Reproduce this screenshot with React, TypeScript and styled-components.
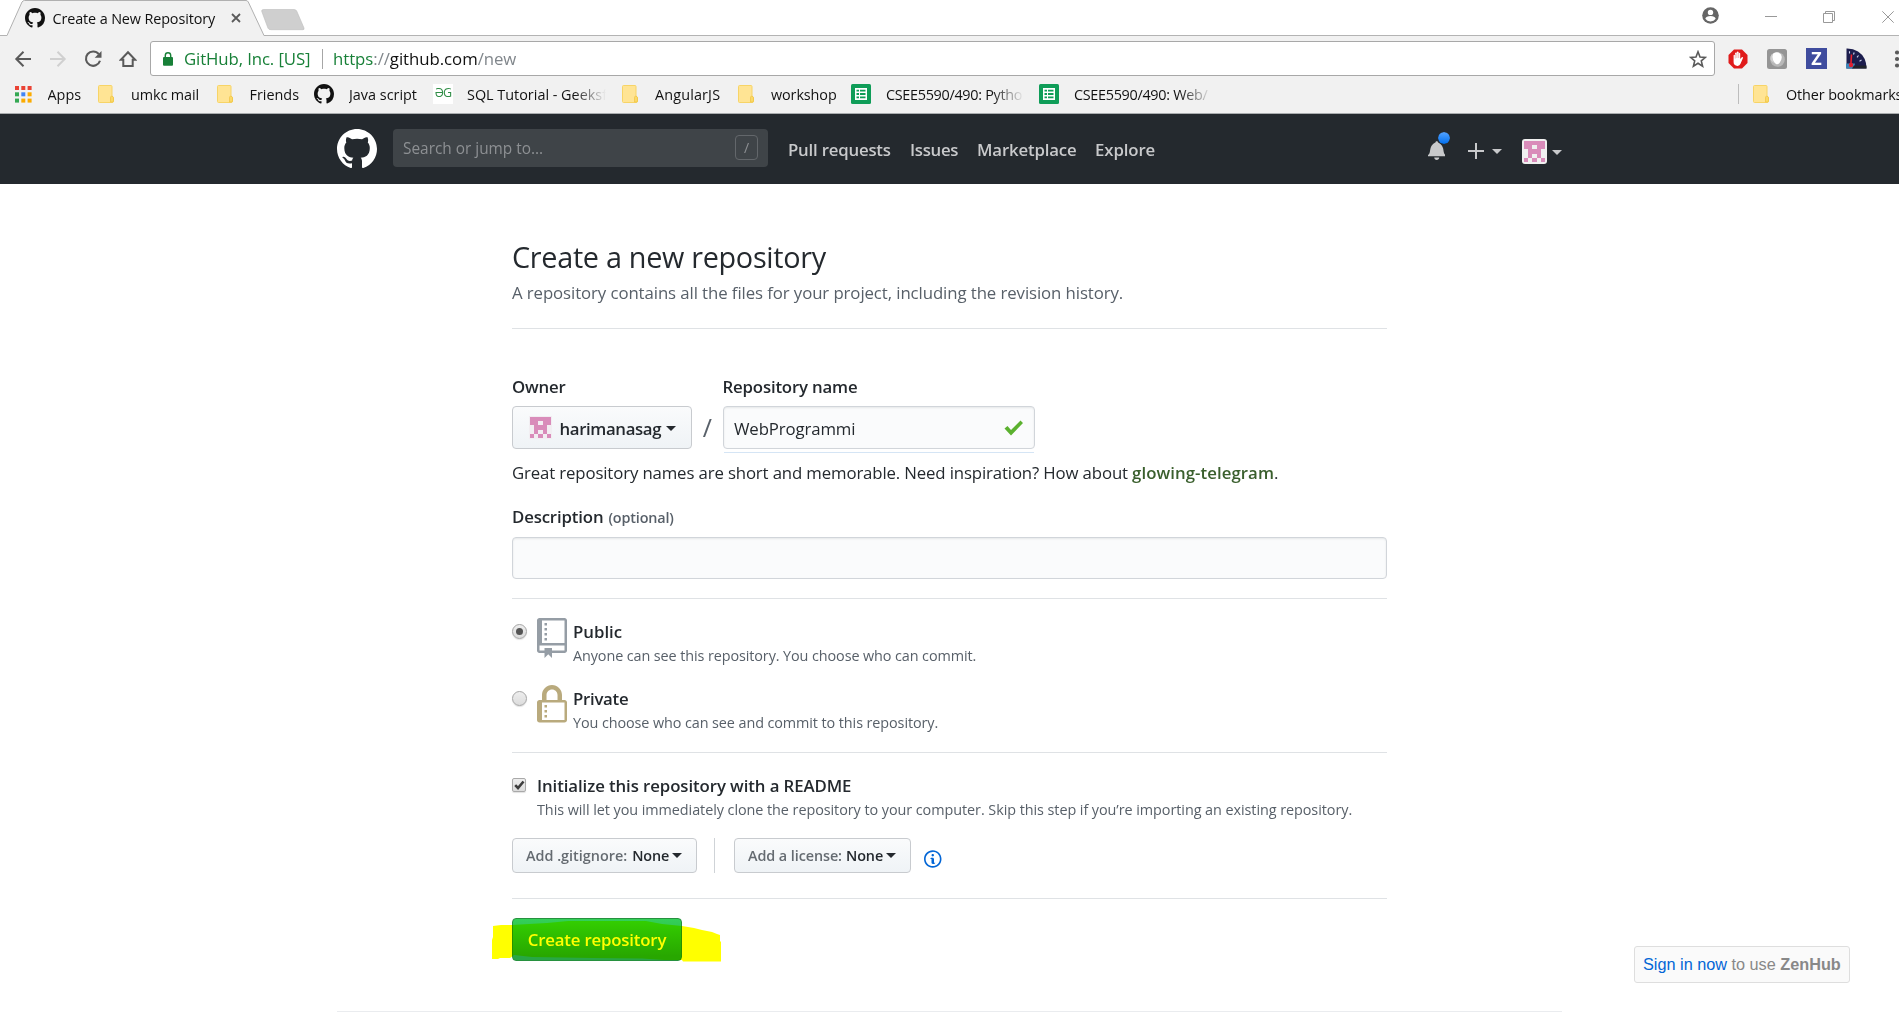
import React from "react";
import styled, { createGlobalStyle, css } from "styled-components";

const GlobalStyle = createGlobalStyle`
  * { box-sizing: border-box; }
  html, body { margin: 0; padding: 0; background: #fff; }
  body {
    font-family: "Open Sans", "Noto Sans", sans-serif;
    font-size: 16.8px;
    color: #24292e;
    overflow: hidden;
  }
  svg { display: block; flex: none; }
`;

const Page = styled.div`
  position: relative;
  width: 1899px;
  height: 1029px;
  overflow: hidden;
  display: flex;
  flex-direction: column;
`;

const Text = styled.span<{ $ls?: number }>`
  white-space: pre;
  letter-spacing: ${(p) => p.$ls ?? 0}px;
`;

/* ---------- browser chrome ---------- */

const TabStrip = styled.div`
  display: flex;
  height: 36px;
  padding-left: 7px;
  background: linear-gradient(#b3b3b3, #b3b3b3) 0 35px / 100% 1px no-repeat #fff;
`;

const Tab = styled.div`
  position: relative;
  display: flex;
  align-items: center;
  width: 259px;
  height: 36px;
  padding: 0 25px 0 18px;
  font-size: 14.4px;
  color: #111;
`;

const TabShape = styled.svg`
  position: absolute;
  left: 0;
  top: 0;
`;

const TabTitle = styled(Text)`
  position: relative;
  margin-left: 7.5px;
  width: 178px;
`;

const TabIcon = styled.span`
  position: relative;
  display: flex;
`;

const NewTab = styled.svg`
  margin: 9px 0 0 -5px;
`;

const WindowControls = styled.div`
  display: flex;
  align-items: flex-start;
  margin-left: auto;
  padding: 7px 5px 0 0;
`;

const WindowGlyph = styled.svg<{ $ml: number; $mt?: number }>`
  margin-left: ${(p) => p.$ml}px;
  margin-top: ${(p) => p.$mt ?? 0}px;
`;

const Toolbar = styled.div`
  display: flex;
  align-items: center;
  height: 41px;
  padding: 5px 0 1px 14px;
  background: #f1f1f1;
`;

const NavButtons = styled.div`
  display: flex;
  flex: none;
  gap: 17px;
  width: 136px;
`;

const Omnibox = styled.div`
  display: flex;
  flex: none;
  align-items: center;
  width: 1565px;
  height: 35px;
  padding: 0 7px 0 12px;
  border: 1px solid #a8a8a8;
  border-radius: 3px;
  background: #fff;
  color: #80868b;
`;

const Identity = styled(Text)`
  width: 138px;
  margin-left: 11px;
  color: #188038;
`;

const OmniDivider = styled.span`
  width: 1px;
  height: 20px;
  margin-right: 10px;
  background: #a6a6a6;
`;

const Secure = styled.span`
  color: #188038;
`;
const Host = styled.span`
  color: #111;
`;

const StarSlot = styled.div`
  margin-left: auto;
`;

const Extensions = styled.div`
  display: flex;
  flex: none;
  align-items: center;
  gap: 19px;
  padding-left: 13px;
`;

const ZBadge = styled.div`
  width: 21px;
  height: 21px;
  background: #3f4c9e;
  color: #fff;
  font-weight: 700;
  font-size: 18px;
  line-height: 21px;
  text-align: center;
`;

const BookmarkBar = styled.div`
  display: flex;
  align-items: center;
  height: 37px;
  padding: 0 0 2px 15px;
  background: #f1f1f1;
  border-bottom: 1px solid #a9acae;
  font-size: 14.4px;
  color: #111;
`;

const BookmarkItem = styled.div<{ $w: number; $off: number }>`
  display: grid;
  grid-template-columns: ${(p) => p.$off}px 1fr;
  align-items: center;
  flex: none;
  width: ${(p) => p.$w}px;
`;

const BookmarkLabel = styled(Text)<{ $clip?: number }>`
  overflow: hidden;
  ${(p) =>
    p.$clip &&
    css`
      width: ${p.$clip}px;
      mask-image: linear-gradient(to right, #000 calc(100% - 32px), transparent);
    `}
`;

const GeeksBadge = styled.div`
  width: 20px;
  height: 20px;
  background: #fff;
  color: #2f8d46;
  font-size: 12.5px;
  line-height: 18px;
  text-align: center;
  letter-spacing: -0.8px;
`;

const OtherBookmarks = styled.div`
  display: flex;
  align-items: center;
  flex: none;
  height: 20px;
  margin-left: auto;
  margin-right: -4px;
  padding-left: 14px;
  border-left: 1px solid #bdbdbd;
  width: 165px;
`;

/* ---------- site header ---------- */

const SiteHeader = styled.header`
  height: 70px;
  padding: 0 337px;
  display: flex;
  align-items: flex-start;
  background: #24292e;
  color: #c8c9cb;
`;

const Logo = styled.div`
  margin-top: 15px;
  width: 56px;
`;

const SearchBox = styled.div`
  display: flex;
  align-items: center;
  justify-content: space-between;
  width: 375px;
  height: 38px;
  margin-top: 15px;
  padding: 0 10px 0 10px;
  border-radius: 4px;
  background: #3f4448;
  color: #8d9093;
  font-size: 15.4px;
`;

const SlashKey = styled.span`
  width: 23px;
  height: 25px;
  margin-top: -1px;
  border: 1px solid #63676b;
  border-radius: 4px;
  font-size: 14px;
  line-height: 23px;
  text-align: center;
`;

const HeaderNav = styled.nav`
  display: flex;
  margin: 23px 0 0 20px;
  font-weight: 600;
  line-height: 26px;
`;

const NavLink = styled(Text)<{ $w: number }>`
  width: ${(p) => p.$w}px;
`;

const HeaderActions = styled.div`
  display: flex;
  align-items: center;
  height: 70px;
  margin-left: auto;
`;

const BellWrap = styled.div`
  position: relative;
  margin-right: 23px;
  margin-top: 1px;
`;

const UnreadDot = styled.span`
  position: absolute;
  left: 9px;
  top: -9px;
  width: 14px;
  height: 14px;
  border: 1.5px solid #24292e;
  border-radius: 50%;
  background: linear-gradient(#54a3ff, #006eed) padding-box;
`;

const PlusIcon = styled.svg`
  margin-top: 3px;
`;

const Caret = styled.span<{ $ml?: number; $mt?: number }>`
  display: inline-block;
  width: 0;
  height: 0;
  margin-left: ${(p) => p.$ml ?? 5}px;
  margin-top: ${(p) => p.$mt ?? 0}px;
  border: 5px solid transparent;
  border-top-color: currentColor;
  border-bottom: 0;
`;

const AvatarFrame = styled.div`
  display: flex;
  align-items: center;
  justify-content: center;
  width: 25px;
  height: 25px;
  margin: 5px 0 0 20px;
  border-radius: 3px;
  background: #f0f0f0;
`;

/* ---------- form ---------- */

const Main = styled.main`
  width: 875px;
  margin: 0 auto;
  padding-top: 54px;
  flex: none;
`;

const Heading = styled.h1`
  margin: 0;
  font-size: 28.8px;
  font-weight: 400;
  line-height: 38px;
  letter-spacing: -0.3px;
  white-space: nowrap;
`;

const Lead = styled.p`
  margin: 4px 0 0;
  line-height: 26px;
  color: #586069;
  letter-spacing: -0.085px;
  white-space: nowrap;
`;

const Rule = styled.div<{ $mt: number }>`
  height: 1px;
  margin-top: ${(p) => p.$mt}px;
  background: #dfe2e5;
`;

const FieldRow = styled.div`
  display: flex;
  margin-top: 45px;
`;

const Field = styled.div``;

const Label = styled.div<{ $h?: number }>`
  height: ${(p) => p.$h ?? 32}px;
  font-weight: 600;
  line-height: 26px;
`;

const Optional = styled(Text)`
  margin-left: 5px;
  font-size: 14.4px;
  color: #586069;
`;

const controlFace = css`
  border: 1px solid #c8cbcf;
  border-radius: 4px;
  background: linear-gradient(#fafbfc, #eff3f6);
`;

const OwnerButton = styled.div`
  ${controlFace}
  display: flex;
  align-items: center;
  width: 180px;
  height: 43px;
  padding: 1px 0 0 15.5px;
  font-weight: 600;
`;

const OwnerAvatar = styled.span`
  display: flex;
  margin: -1px 8px 0 0;
  padding: 1px;
  background: #f2eef2;
`;

const Slash = styled.div`
  width: 30.5px;
  padding: 32px 0 0 0;
  font-size: 25px;
  line-height: 43px;
  text-align: center;
  color: #586069;
`;

const Input = styled.div<{ $w: number; $h: number }>`
  display: flex;
  align-items: center;
  justify-content: space-between;
  width: ${(p) => p.$w}px;
  height: ${(p) => p.$h}px;
  padding: 1px 10px 0 10.5px;
  border: 1px solid #d1d5da;
  border-radius: 4px;
  background: #fafbfc;
  box-shadow: inset 0 1px 2px rgba(27, 31, 35, 0.09);
`;

const FocusEdge = styled.div`
  width: 310px;
  height: 1px;
  margin: 3px 0 -4px 1px;
  background: #d5e5f5;
`;

const Hint = styled.p`
  margin: 11px 0 18px;
  line-height: 26px;
  white-space: nowrap;
`;

const Suggestion = styled(Text)`
  font-weight: 600;
  color: #3a5f2d;
`;

const ChoiceRow = styled.div<{ $mt: number }>`
  display: flex;
  height: 46px;
  margin-top: ${(p) => p.$mt}px;
`;

const Radio = styled.span<{ $on?: boolean }>`
  display: flex;
  align-items: center;
  justify-content: center;
  width: 15px;
  height: 15px;
  margin: 4px 10px 0 0;
  border: 1px solid #a5a5a5;
  border-radius: 50%;
  background: linear-gradient(#eee, #dcdcdc);
  box-shadow: 0 1px 1px rgba(0, 0, 0, 0.12);
  &::after {
    content: "";
    width: 7px;
    height: 7px;
    border-radius: 50%;
    background: ${(p) => (p.$on ? "#555" : "transparent")};
  }
`;

const ChoiceIcon = styled.div<{ $mt: number }>`
  width: 36px;
  margin-top: ${(p) => p.$mt}px;
`;

const ChoiceTitle = styled.div`
  font-weight: 600;
  line-height: 24px;
  height: 24px;
`;

const ChoiceNote = styled.div`
  font-size: 14.4px;
  line-height: 24px;
  color: #586069;
`;

const Checkbox = styled.span`
  display: flex;
  align-items: center;
  justify-content: center;
  width: 14px;
  height: 14px;
  margin: 4px 11px 0 0;
  border: 1px solid #a9a9a9;
  border-radius: 2px;
  background: linear-gradient(#eee, #dcdcdc);
  box-shadow: 0 1px 1px rgba(0, 0, 0, 0.12);
`;

const Options = styled.div`
  display: flex;
  margin-top: 18px;
  height: 35px;
`;

const SelectButton = styled.div<{ $w: number }>`
  ${controlFace}
  display: flex;
  align-items: center;
  width: ${(p) => p.$w}px;
  padding: 0 0 1px 13px;
  font-size: 14.4px;
  font-weight: 600;
`;

const Muted = styled(Text)<{ $gap: number }>`
  margin-right: ${(p) => p.$gap}px;
  color: #656b71;
`;

const OptionDivider = styled.span`
  width: 1px;
  margin: 0 19px 0 17px;
  background: #cfd3d7;
`;

const InfoSlot = styled.span`
  margin: 11px 0 0 13px;
`;

const SubmitArea = styled.div`
  position: relative;
  margin-top: 19px;
  height: 43px;
`;

const SubmitButton = styled.div`
  display: flex;
  align-items: center;
  justify-content: center;
  width: 170px;
  height: 43px;
  border: 1px solid #27913f;
  border-radius: 4px;
  background: linear-gradient(#34d058, #28a745 90%);
  color: #fff;
  font-weight: 600;
`;

const Marker = styled.svg`
  position: absolute;
  left: -20px;
  top: 2px;
  mix-blend-mode: multiply;
`;

const FooterRule = styled.div`
  flex: none;
  height: 1px;
  margin: 50px 337px 0;
  background: #eaecef;
`;

const ZenHub = styled.div`
  position: absolute;
  left: 1634px;
  top: 946px;
  display: flex;
  gap: 4.5px;
  width: 216px;
  height: 37px;
  padding-left: 8px;
  border: 1px solid #dedede;
  border-radius: 3px;
  background: #fafafa;
  font-family: "Liberation Sans", Arial, sans-serif;
  font-size: 16.25px;
  line-height: 35px;
  color: #888;
`;

const ZenLink = styled(Text)`
  color: #0366d6;
`;

/* ---------- drawings ---------- */

const CAT =
  "M8 0C3.58 0 0 3.58 0 8c0 3.54 2.29 6.53 5.47 7.59.4.07.55-.17.55-.38 0-.19-.01-.82-.01-1.49-2.01.37-2.53-.49-2.69-.94-.09-.23-.48-.94-.82-1.13-.28-.15-.68-.52-.01-.53.63-.01 1.08.58 1.23.82.72 1.21 1.87.87 2.33.66.07-.52.28-.87.51-1.07-1.78-.2-3.64-.89-3.64-3.95 0-.87.31-1.59.82-2.15-.08-.2-.36-1.02.08-2.12 0 0 .67-.21 2.2.82.64-.18 1.32-.27 2-.27s1.36.09 2 .27c1.53-1.04 2.2-.82 2.2-.82.44 1.1.16 1.92.08 2.12.51.56.82 1.27.82 2.15 0 3.07-1.87 3.75-3.65 3.95.29.25.54.73.54 1.48 0 1.07-.01 1.93-.01 2.2 0 .21.15.46.55.38A8.01 8.01 0 0 0 16 8c0-4.42-3.58-8-8-8z";

const Cat = ({ size, fill }: { size: number; fill: string }) => (
  <svg width={size} height={size} viewBox="0 0 16 16" fill={fill}>
    <path d={CAT} />
  </svg>
);

const IDENTICON = ["11111", "11011", "01110", "01010", "10101"];

const Identicon = ({ w, h }: { w: number; h: number }) => (
  <svg width={w} height={h} viewBox="0 0 5 5" preserveAspectRatio="none" fill="#d98cba" shapeRendering="crispEdges">
    {IDENTICON.flatMap((row, y) =>
      row.split("").map((c, x) => (c === "1" ? <rect key={`${x}${y}`} x={x} y={y} width="1" height="1" /> : null))
    )}
  </svg>
);

const Folder = () => (
  <svg width="16" height="18" viewBox="0 0 16 18">
    <path d="M1.5.5H13q1 0 1 1V11l1.500 1.500V16q0 1.500-1.500 1.500H1.500q-1 0-1-1v-15q0-1 1-1z" fill="#ffe494" stroke="#f7d467" />
    <path d="M12.500 17v-4.500q0-1.300 1.300-1.300t1.700 1.300V16q0 1-1 1z" fill="#fbd968" stroke="#efc343" strokeWidth=".7" />
  </svg>
);

const APP_COLORS = ["#ea4335", "#ea4335", "#ea4335", "#34a853", "#4285f4", "#fbab00", "#34a853", "#fbab00", "#fbab00"];

const AppsGrid = () => (
  <svg width="17" height="17" viewBox="0 0 17 17">
    {APP_COLORS.map((c, i) => (
      <rect key={i} x={(i % 3) * 6.3} y={Math.floor(i / 3) * 6.3} width="4" height="4" fill={c} />
    ))}
  </svg>
);

const Sheet = () => (
  <svg width="20" height="20" viewBox="0 0 20 20">
    <rect width="20" height="20" rx="1.500" fill="#0f9d58" />
    <path d="M4 4h12v12H4z" fill="#fff" />
    <path d="M5.500 5.800h2.500v1.800H5.500zM9 5.800h5.500v1.800H9zM5.500 9.100h2.500v1.800H5.500zM9 9.100h5.500v1.800H9zM5.500 12.400h2.500v1.800H5.500zM9 12.400h5.500v1.800H9z" fill="#0f9d58" />
  </svg>
);

const NavIcons = () => (
  <NavButtons>
    <svg width="18" height="18" viewBox="0 0 18 18" fill="none" stroke="#5a5a5a" strokeWidth="2">
      <path d="M17 9H2.500M9.500 1.800L2.300 9l7.200 7.200" />
    </svg>
    <svg width="18" height="18" viewBox="0 0 18 18" fill="none" stroke="#d0d0d0" strokeWidth="2">
      <path d="M1 9h14.500M8.500 1.800L15.700 9l-7.200 7.200" />
    </svg>
    <svg width="18" height="18" viewBox="0 0 18 18" fill="none" stroke="#5a5a5a" strokeWidth="2.100">
      <path d="M14.800 4.200A7.200 7.200 0 1 0 16 10.800" />
      <path d="M17.500 1v6.800h-6.800z" fill="#5a5a5a" stroke="none" />
    </svg>
    <svg width="18" height="18" viewBox="0 0 18 18" fill="none" stroke="#5a5a5a" strokeWidth="2">
      <path d="M9 2.200L1.800 9.700H4.300V16h9.400V9.700h2.500z" />
    </svg>
  </NavButtons>
);

type Mark = { icon: React.ReactNode; label: string; w: number; off: number; ls?: number; clip?: number };

const MARKS: Mark[] = [
  { icon: <AppsGrid />, label: "Apps", w: 83, off: 32.5 },
  { icon: <Folder />, label: "umkc mail", w: 119, off: 33, ls: -0.1 },
  { icon: <Folder />, label: "Friends", w: 97, off: 32.5 },
  { icon: <Cat size={20} fill="#111" />, label: "Java script", w: 119, off: 35 },
  { icon: <GeeksBadge>ӘG</GeeksBadge>, label: "SQL Tutorial - Geeksf", w: 189, off: 34, clip: 139 },
  { icon: <Folder />, label: "AngularJS", w: 116, off: 33, ls: 0.15 },
  { icon: <Folder />, label: "workshop", w: 113, off: 33, ls: -0.1 },
  { icon: <Sheet />, label: "CSEE5590/490: Pytho", w: 188, off: 35, ls: -0.3, clip: 138 },
  { icon: <Sheet />, label: "CSEE5590/490: Web/", w: 180, off: 35, ls: -0.3, clip: 138 },
];

const Browser = () => (
  <>
    <TabStrip>
      <Tab>
        <TabShape width="259" height="36" viewBox="0 0 259 36">
          <path d="M0 35.500L15 2Q16 .5 17.500.5H239Q240.500.5 241.300 2L257 35.500V36H0z" fill="#f1f1f1" />
          <path d="M0 35.500L15 2Q16 .5 17.500.5H239Q240.500.5 241.300 2L257 35.500H259" fill="none" stroke="#b0b0b0" />
        </TabShape>
        <TabIcon>
          <Cat size={20} fill="#111" />
        </TabIcon>
        <TabTitle $ls={-0.12}>Create a New Repository</TabTitle>
        <TabIcon>
          <svg width="10" height="10" viewBox="0 0 10 10" stroke="#5a5a5a" strokeWidth="1.800">
            <path d="M1 1l8 8M9 1L1 9" />
          </svg>
        </TabIcon>
      </Tab>
      <NewTab width="44" height="22" viewBox="0 0 44 22">
        <path d="M2.500.5H33q2 0 2.700 1.500L43 19q.6 1.700-1 1.700H10q-2.300 0-3-1.500L.8 2.500Q.2.500 2.500.5z" fill="#cfcfcf" stroke="#bdbdbd" strokeWidth=".6" />
      </NewTab>
      <WindowControls>
        <WindowGlyph $ml={0} width="17" height="17" viewBox="0 0 17 17">
          <circle cx="8.500" cy="8.500" r="8.300" fill="#666" />
          <circle cx="8.500" cy="5.400" r="2.700" fill="#fff" />
          <path d="M3.300 11.800q.8-2.700 5.200-2.700t5.200 2.700q-1.800 2.600-5.200 2.600t-5.200-2.600z" fill="#fff" />
        </WindowGlyph>
        <WindowGlyph $ml={46} $mt={4} width="12" height="12" viewBox="0 0 12 12" stroke="#999">
          <path d="M0 5.500h12" />
        </WindowGlyph>
        <WindowGlyph $ml={46} $mt={4} width="12" height="12" viewBox="0 0 12 12" stroke="#999" fill="none">
          <path d="M.5 2.500h9v9h-9zM2.500 2.500v-2h9v9h-2" />
        </WindowGlyph>
        <WindowGlyph $ml={47} $mt={4} width="12" height="12" viewBox="0 0 12 12" stroke="#999">
          <path d="M.3.3l11.400 11.400M11.700.3L.3 11.700" />
        </WindowGlyph>
      </WindowControls>
    </TabStrip>
    <Toolbar>
      <NavIcons />
      <Omnibox>
        <svg width="10" height="14" viewBox="0 0 10 14">
          <rect y="5" width="10" height="8.700" rx="1" fill="#188038" />
          <path d="M2.300 6V3.500a2.700 2.700 0 0 1 5.400 0V6" fill="none" stroke="#188038" strokeWidth="1.400" />
        </svg>
        <Identity $ls={-0.11}>GitHub, Inc. [US]</Identity>
        <OmniDivider />
        <Text $ls={-0.05}>
          <Secure>https</Secure>://<Host>github.com</Host>/new
        </Text>
        <StarSlot>
          <svg width="18" height="18" viewBox="0 0 18 18" fill="none" stroke="#5a5a5a" strokeWidth="1.600">
            <path d="M9 1.800l2 5.200 5.400.4-4.100 3.500 1.300 5.300L9 13.300l-4.600 2.900 1.300-5.300L1.600 7.400 7 7z" />
          </svg>
        </StarSlot>
      </Omnibox>
      <Extensions>
        <svg width="20" height="20" viewBox="0 0 20 20">
          <path d="M6 .5h8L19.500 6v8L14 19.500H6L.5 14V6z" fill="#e01b1b" />
          <path d="M5.600 11V6.200q.8-1 1.500 0V4q.9-1.100 1.700 0V3q.9-1 1.800 0v1.200q.8-1 1.600 0V10l1.600-1.800q1-.4 1.300.6l-2.600 6Q11.700 17 9.500 16.900q-3.900-.2-3.900-3.900z" fill="#fff" />
          <path d="M7.200 5v4.500M8.900 4V9M10.700 4V9" stroke="#e07070" strokeWidth=".5" />
        </svg>
        <svg width="20" height="20" viewBox="0 0 20 20">
          <rect width="20" height="20" rx="2.500" fill="#959595" />
          <circle cx="10.500" cy="10.500" r="7.300" fill="#b8b8b8" />
          <path d="M6.500 4.200Q11 1.800 14 5.500q2 4-1.500 8.500-1.800 2-3.500 1Q5 11.500 5.200 7.500q.3-2.500 1.300-3.300z" fill="#fff" />
          <path d="M3.500 7.500Q4.500 5 5.800 4.600 4.300 9 7.500 14 2.500 12 3.500 7.500z" fill="#d0d0d0" />
        </svg>
        <ZBadge>Z</ZBadge>
        <svg width="21" height="21" viewBox="0 0 21 21">
          <path d="M.5.5Q7 .3 12 3.500 20.500 9 20.500 20.500H.5z" fill="#1c1d4d" />
          <path d="M0 15.500h9l-1 5H0z" fill="#3f86b8" />
          <path d="M8 17.500h12.500v3H6z" fill="#20242c" />
          <path d="M4.800 18L5.500 6.500" stroke="#f0202c" strokeWidth="1.600" />
          <circle cx="5" cy="17" r="2.200" fill="#e02030" />
          <path d="M3.500 3.200v2.200M8.200 4.500L7.500 6.500M12.500 7.500L11 9.300M15.500 12l-2 1.200" stroke="#cfd4ee" strokeWidth="1.100" />
        </svg>
        <svg width="16" height="18" viewBox="0 0 16 18" fill="#5a5a5a">
          <circle cx="11" cy="2.500" r="2.100" />
          <circle cx="11" cy="9" r="2.100" />
          <circle cx="11" cy="15.500" r="2.100" />
        </svg>
      </Extensions>
    </Toolbar>
    <BookmarkBar>
      {MARKS.map((m) => (
        <BookmarkItem key={m.label} $w={m.w} $off={m.off}>
          {m.icon}
          <BookmarkLabel $ls={m.ls} $clip={m.clip}>
            {m.label}
          </BookmarkLabel>
        </BookmarkItem>
      ))}
      <OtherBookmarks>
        <BookmarkItem $w={150} $off={33}>
          <Folder />
          <Text $ls={-0.12}>Other bookmarks</Text>
        </BookmarkItem>
      </OtherBookmarks>
    </BookmarkBar>
  </>
);

const Header = () => (
  <SiteHeader>
    <Logo>
      <Cat size={40} fill="#fff" />
    </Logo>
    <SearchBox>
      <Text>Search or jump to...</Text>
      <SlashKey>/</SlashKey>
    </SearchBox>
    <HeaderNav>
      <NavLink $w={122} $ls={-0.2}>Pull requests</NavLink>
      <NavLink $w={67} $ls={-0.3}>Issues</NavLink>
      <NavLink $w={118} $ls={-0.15}>Marketplace</NavLink>
      <NavLink $w={62} $ls={-0.1}>Explore</NavLink>
    </HeaderNav>
    <HeaderActions>
      <BellWrap>
        <svg width="17.500" height="20" viewBox="0 0 14 16" fill="currentColor">
          <path d="M14 12v1H0v-1l.73-.58c.77-.77.81-2.55 1.190-4.420C2.690 3.230 6 2 6 2c0-.55.45-1 1-1s1 .45 1 1c0 0 3.390 1.230 4.160 5 .38 1.880.42 3.660 1.190 4.420l.66.58H14zm-7 4c1.110 0 2-.89 2-2H5c0 1.110.89 2 2 2z" />
        </svg>
        <UnreadDot />
      </BellWrap>
      <PlusIcon width="16" height="20" viewBox="0 0 16 20" fill="none" stroke="currentColor" strokeWidth="2">
        <path d="M0 10h16M8 2v16" />
      </PlusIcon>
      <Caret $ml={8} $mt={4} />
      <AvatarFrame>
        <Identicon w={21} h={21} />
      </AvatarFrame>
      <Caret $ml={5} $mt={7} />
    </HeaderActions>
  </SiteHeader>
);

export default function App() {
  return (
    <Page>
      <GlobalStyle />
      <Browser />
      <Header />
      <Main>
        <Heading>Create a new repository</Heading>
        <Lead>A repository contains all the files for your project, including the revision history.</Lead>
        <Rule $mt={22} />
        <FieldRow>
          <Field>
            <Label>
              <Text $ls={-0.2}>Owner</Text>
            </Label>
            <OwnerButton>
              <OwnerAvatar>
                <Identicon w={21} h={21} />
              </OwnerAvatar>
              <Text $ls={-0.37}>harimanasag</Text>
              <Caret $ml={5} />
            </OwnerButton>
          </Field>
          <Slash>/</Slash>
          <Field>
            <Label>
              <Text $ls={-0.17}>Repository name</Text>
            </Label>
            <Input $w={312.5} $h={43}>
              <Text $ls={-0.12}>WebProgrammi</Text>
              <svg width="21" height="18" viewBox="0 0 21 18">
                <path d="M1.500 9.500L4.500 7l3.500 4L17.500 1.500 20 4 8 16.500z" fill="#5bb12f" />
              </svg>
            </Input>
            <FocusEdge />
          </Field>
        </FieldRow>
        <Hint>
          <Text $ls={-0.138}>Great repository names are short and memorable. Need inspiration? How about </Text>
          <Suggestion $ls={0.06}>glowing-telegram</Suggestion>.
        </Hint>
        <Label $h={33}>
          <Text $ls={-0.15}>Description</Text>
          <Optional $ls={-0.15}>(optional)</Optional>
        </Label>
        <Input $w={875} $h={42} />
        <Rule $mt={19} />
        <ChoiceRow $mt={21}>
          <Radio $on />
          <ChoiceIcon $mt={-2}>
            <svg width="30" height="40" viewBox="0 0 12 16" fill="#959da5">
              <path d="M4 9H3V8h1v1zm0-3H3v1h1V6zm0-2H3v1h1V4zm0-2H3v1h1V2zm8-1v12c0 .55-.45 1-1 1H6v2l-1.500-1.500L3 16v-2H1c-.55 0-1-.45-1-1V1c0-.55.45-1 1-1h10c.55 0 1 .45 1 1zm-1 10H1v2h2v-1h3v1h5v-2zm0-10H2v9h9V1z" />
            </svg>
          </ChoiceIcon>
          <div>
            <ChoiceTitle>Public</ChoiceTitle>
            <ChoiceNote>
              <Text $ls={-0.095}>Anyone can see this repository. You choose who can commit.</Text>
            </ChoiceNote>
          </div>
        </ChoiceRow>
        <ChoiceRow $mt={21}>
          <Radio />
          <ChoiceIcon $mt={-2}>
            <svg width="30" height="40" viewBox="0 0 12 16" fill="#b9aa7d">
              <path d="M4 13H3v-1h1v1zm8-6v7c0 .55-.45 1-1 1H1c-.55 0-1-.45-1-1V7c0-.55.45-1 1-1h1V4c0-2.200 1.800-4 4-4s4 1.800 4 4v2h1c.55 0 1 .45 1 1zM3.800 6h4.410V4c0-1.220-.98-2.200-2.200-2.200-1.220 0-2.200.98-2.200 2.200v2H3.800zM11 7H2v7h9V7zM4 8H3v1h1V8zm0 2H3v1h1v-1z" />
            </svg>
          </ChoiceIcon>
          <div>
            <ChoiceTitle>
              <Text $ls={-0.28}>Private</Text>
            </ChoiceTitle>
            <ChoiceNote>
              <Text $ls={-0.09}>You choose who can see and commit to this repository.</Text>
            </ChoiceNote>
          </div>
        </ChoiceRow>
        <Rule $mt={19} />
        <ChoiceRow $mt={21}>
          <Checkbox>
            <svg width="11" height="10" viewBox="0 0 11 10" fill="none" stroke="#3d3d3d" strokeWidth="2.600">
              <path d="M1.200 5.200L4 8 9.500 1.500" />
            </svg>
          </Checkbox>
          <div>
            <ChoiceTitle>
              <Text $ls={-0.085}>Initialize this repository with a README</Text>
            </ChoiceTitle>
            <ChoiceNote>
              <Text $ls={-0.06}>
                This will let you immediately clone the repository to your computer. Skip this step if you’re importing an existing repository.
              </Text>
            </ChoiceNote>
          </div>
        </ChoiceRow>
        <Options>
          <SelectButton $w={185}>
            <Muted $gap={5}>Add .gitignore:</Muted>
            <Text $ls={-0.1}>None</Text>
            <Caret $ml={3} $mt={1} />
          </SelectButton>
          <OptionDivider />
          <SelectButton $w={177}>
            <Muted $gap={4} $ls={-0.08}>Add a license:</Muted>
            <Text $ls={-0.1}>None</Text>
            <Caret $ml={3} $mt={1} />
          </SelectButton>
          <InfoSlot>
            <svg width="17.500" height="20" viewBox="0 0 14 16" fill="#0366d6">
              <path d="M6.300 5.690a.942.942 0 0 1-.28-.7c0-.28.09-.52.28-.7.19-.18.42-.28.7-.28.28 0 .52.09.7.28.18.19.28.42.28.7 0 .28-.09.52-.28.7a1 1 0 0 1-.7.3c-.28 0-.52-.11-.7-.3zM8 7.990c-.02-.25-.11-.48-.31-.69-.2-.19-.42-.3-.69-.31H6c-.27.02-.48.13-.69.31-.2.2-.3.44-.31.69h1v3c.02.27.11.5.31.69.2.2.42.31.69.31h1c.27 0 .48-.11.69-.31.2-.19.3-.42.31-.69H8V7.980v.01zM7 2.300c-3.140 0-5.700 2.540-5.700 5.680 0 3.140 2.560 5.700 5.700 5.700s5.700-2.550 5.700-5.700c0-3.150-2.560-5.690-5.700-5.690v.01zM7 .98c3.860 0 7 3.140 7 7s-3.140 7-7 7-7-3.120-7-7 3.140-7 7-7z" />
            </svg>
          </InfoSlot>
        </Options>
        <Rule $mt={25} />
        <SubmitArea>
          <SubmitButton>
            <Text $ls={-0.18}>Create repository</Text>
          </SubmitButton>
          <Marker width="229" height="43" viewBox="0 0 229 43">
            <path d="M1 6L9 5H20L37 4 55 3 76 1H154L170 4 190 6 202 8 210 10 220 12 225 14 228 15V21L229 22V41.500H191L190 40H172L150 38.500 100 38 40 37 22 35 18 38H8L6 39H0V20L1 17z" fill="#ff0" />
          </Marker>
        </SubmitArea>
      </Main>
      <FooterRule />
      <ZenHub>
        <ZenLink>Sign in now</ZenLink>
        <Text>to use</Text>
        <b>ZenHub</b>
      </ZenHub>
    </Page>
  );
}
